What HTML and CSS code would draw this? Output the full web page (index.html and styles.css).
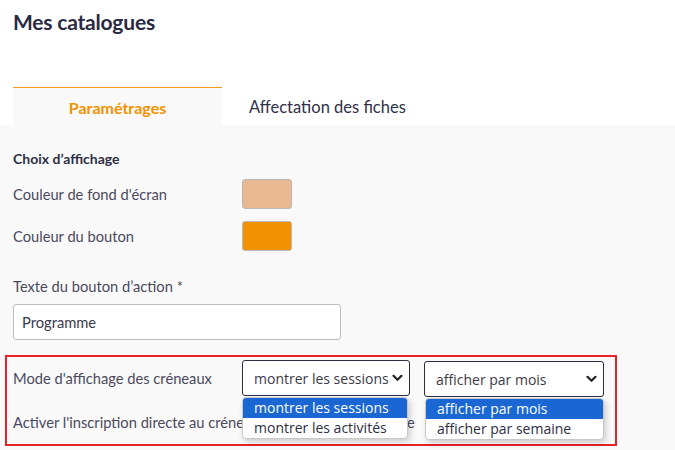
FILE: index.html
```html
<!DOCTYPE html>
<html lang="fr">
<head>
<meta charset="utf-8">
<title>Mes catalogues</title>
<link rel="stylesheet" href="styles.css">
</head>
<body>
<header class="page-head">
  <h1 class="title">Mes catalogues</h1>
</header>
<nav class="tabs">
  <div class="tab tab-active">Paramétrages</div>
  <div class="tab">Affectation des fiches</div>
</nav>
<main class="panel">
  <h2 class="section-title">Choix d’affichage</h2>
  <div class="row">
    <span class="label">Couleur de fond d'écran</span>
    <span class="swatch swatch-bg"></span>
  </div>
  <div class="row">
    <span class="label">Couleur du bouton</span>
    <span class="swatch swatch-btn"></span>
  </div>
  <div class="field">
    <label class="label">Texte du bouton d’action *</label>
    <div class="input">Programme</div>
  </div>
  <div class="highlight">
    <div class="row row-select">
      <span class="label">Mode d'affichage des créneaux</span>
      <div class="select-wrap sel1">
        <div class="select">
          <span>montrer les sessions</span>
          <svg class="chev" width="11" height="8" viewBox="0 0 11 8"><path d="M1.5 1.8 L5.5 5.8 L9.5 1.8" fill="none" stroke="#222" stroke-width="2.2" stroke-linecap="round" stroke-linejoin="round"/></svg>
        </div>
        <ul class="options">
          <li class="opt opt-on">montrer les sessions</li>
          <li class="opt">montrer les activités</li>
        </ul>
      </div>
      <div class="select-wrap sel2">
        <div class="select">
          <span>afficher par mois</span>
          <svg class="chev" width="11" height="8" viewBox="0 0 11 8"><path d="M1.5 1.8 L5.5 5.8 L9.5 1.8" fill="none" stroke="#222" stroke-width="2.2" stroke-linecap="round" stroke-linejoin="round"/></svg>
        </div>
        <ul class="options">
          <li class="opt opt-on">afficher par mois</li>
          <li class="opt">afficher par semaine</li>
        </ul>
      </div>
    </div>
    <div class="row-text">
      <span class="label">Activer l'inscription directe au créneau depuis la fiche publique</span>
    </div>
  </div>
</main>
</body>
</html>
```

FILE: styles.css
```css
* { box-sizing: border-box; }
html, body { margin: 0; padding: 0; background: #fff; }
body {
  font-family: Lato, "Noto Sans", sans-serif;
  color: #3f3f55;
  width: 675px;
  height: 450px;
  overflow: hidden;
}
.page-head { padding: 10px 13px 0; height: 87px; }
.title {
  margin: 0;
  font-size: 21px;
  line-height: 24px;
  font-weight: 700;
  color: #2a2a42;
  letter-spacing: -0.2px;
}
.tabs {
  display: flex;
  padding-left: 13px;
  height: 38px;
}
.tab {
  display: flex;
  align-items: center;
  font-size: 16.5px;
  color: #30304a;
  padding: 1px 0 0 27px;
}
.tab-active {
  width: 209px;
  justify-content: center;
  padding-left: 0;
  background: #f9f9f9;
  border-top: 1px solid #f39a1f;
  color: #f39200;
  font-weight: 700;
  font-size: 16px;
}
.panel {
  background: #f9f9f9;
  padding: 24px 13px 0 13px;
  height: 325px;
}
.section-title {
  margin: 0 0 10px;
  font-size: 14px;
  line-height: 20px;
  font-weight: 700;
  color: #2f2f45;
}
.row {
  display: flex;
  align-items: center;
  margin-bottom: 12px;
}
.label {
  font-size: 14.7px;
  color: #4a4a5e;
  width: 229px;
  flex: none;
  white-space: nowrap;
}
.swatch {
  width: 50px;
  height: 30px;
  border: 1px solid #b9b9b9;
  border-radius: 3px;
}
.swatch-bg { background: #ebb991; }
.swatch-btn { background: #f39200; }
.field { margin-top: 25px; display: flex; flex-direction: column; }
.field .label { line-height: 20px; }
.input {
  margin-top: 8px;
  width: 328px;
  height: 36px;
  background: #fff;
  border: 1px solid #bdbdbd;
  border-radius: 3px;
  padding: 0 8px;
  display: flex;
  align-items: center;
  font-size: 14.7px;
  color: #3a3a50;
}
.highlight {
  margin: 15px 0 0 -8px;
  width: 612px;
  height: 91px;
  border: 2px solid #e8222b;
  padding: 3px 0 0 6px;
}
.row-select { margin-bottom: 0; align-items: flex-start; }
.row-select .label { line-height: 36px; }
.select-wrap { position: relative; z-index: 2; }
.sel1 { width: 168px; margin-right: 14px; }
.sel2 { width: 180px; margin-top: 1px; }
.select {
  height: 36px;
  background: #fff;
  border: 1px solid #2d2d42;
  border-radius: 3px;
  display: flex;
  align-items: center;
  justify-content: space-between;
  padding: 0 6px 0 11px;
  font-family: "Open Sans", sans-serif;
  font-size: 14px;
  color: #3a3a48;
}
.chev { flex: none; }
.options {
  position: absolute;
  top: 37px;
  left: 0;
  right: 2px;
  margin: 0;
  padding: 0;
  list-style: none;
  background: #fff;
  border: 1px solid #c8c8c8;
  border-radius: 4px;
  box-shadow: 2px 3px 6px rgba(0,0,0,0.18);
  overflow: hidden;
  font-family: "Open Sans", sans-serif;
  font-size: 14px;
}
.sel2 .options { right: 0; top: 37px; left: 1px; }
.opt {
  height: 20px;
  line-height: 20px;
  padding-left: 11px;
  color: #2e2e44;
}
.opt-on { background: #1a66d2; color: #fff; }
.row-text { margin-top: 15px; line-height: 20px; position: relative; z-index: 1; }
.row-text .label { width: auto; }
```
